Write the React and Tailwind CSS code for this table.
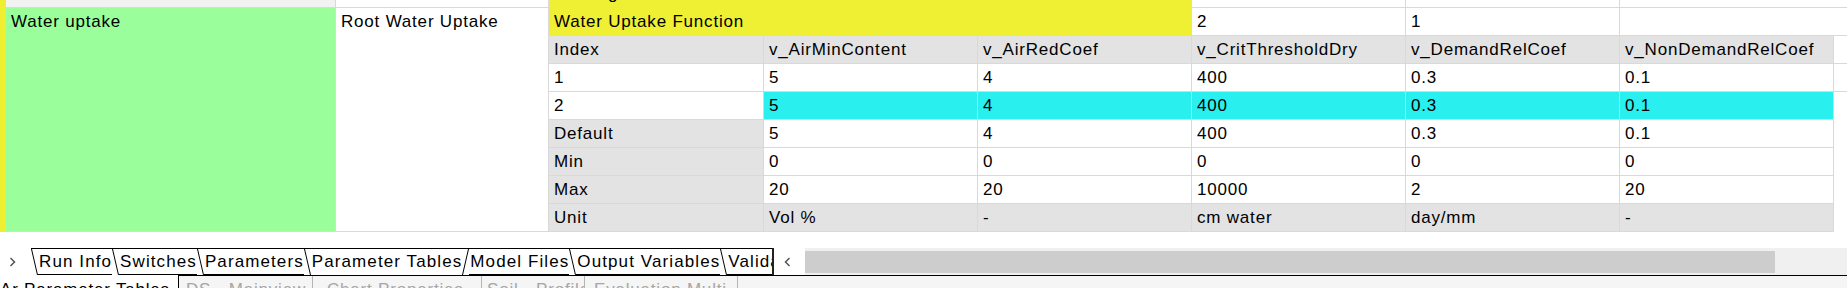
import React from "react";

const header = [
  "Index",
  "v_AirMinContent",
  "v_AirRedCoef",
  "v_CritThresholdDry",
  "v_DemandRelCoef",
  "v_NonDemandRelCoef",
];

// parameter table body: label column + five value columns
const rows = [
  { label: "1", values: ["5", "4", "400", "0.3", "0.1"], labelBg: "bg-white", valueBg: "bg-white", tail: true },
  { label: "2", values: ["5", "4", "400", "0.3", "0.1"], labelBg: "bg-white", valueBg: "bg-[#2aefef]", tail: false },
  { label: "Default", values: ["5", "4", "400", "0.3", "0.1"], labelBg: "bg-[#e3e3e3]", valueBg: "bg-white", tail: false },
  { label: "Min", values: ["0", "0", "0", "0", "0"], labelBg: "bg-[#e3e3e3]", valueBg: "bg-white", tail: false },
  { label: "Max", values: ["20", "20", "10000", "2", "20"], labelBg: "bg-[#e3e3e3]", valueBg: "bg-white", tail: false },
  { label: "Unit", values: ["Vol %", "-", "cm water", "day/mm", "-"], labelBg: "bg-[#e3e3e3]", valueBg: "bg-[#e3e3e3]", tail: false },
];

const tabs = [
  { name: "Run Info" },
  { name: "Switches" },
  { name: "Parameters" },
  { name: "Parameter Tables", active: true },
  { name: "Model Files" },
  { name: "Output Variables" },
  { name: "Validation" },
];

const subTabs = [
  { name: "DS - Mainview", w: "w-[134px]", pl: "pl-[7px]" },
  { name: "Chart Properties", w: "w-[169px]", pl: "pl-[14px]" },
  { name: "Soil - Profile", w: "w-[103px]", pl: "pl-[5px]" },
  { name: "Evaluation Multi", w: "w-[153px]", pl: "pl-[9px]" },
];

function Cell({ children, className }) {
  return (
    <div
      className={`flex h-full shrink-0 items-center overflow-hidden whitespace-nowrap border-b border-r border-[#d9d9d9] pl-[5px] ${className}`}
    >
      {children}
    </div>
  );
}

function TableRow({ label, values, labelBg, valueBg, tail }) {
  return (
    <div className="flex h-[28px]">
      <Cell className={`w-[215px] ${labelBg}`}>{label}</Cell>
      {values.map((v, i) => (
        <Cell key={i} className={`w-[214px] ${valueBg}`}>
          {v}
        </Cell>
      ))}
      <div className={tail ? "flex-1 border-b border-[#d9d9d9]" : "flex-1"} />
    </div>
  );
}

function Slash({ back = true }) {
  return (
    <svg width="7" height="26" viewBox="0 0 7 26" className="shrink-0">
      {back ? (
        <line x1="0.5" y1="0" x2="6.5" y2="26" stroke="#000" strokeWidth="1" />
      ) : (
        <line x1="0.5" y1="26" x2="6.5" y2="0" stroke="#000" strokeWidth="1" />
      )}
    </svg>
  );
}

function SheetTabs() {
  return (
    <div className="flex h-[27px] w-[741px] shrink-0 overflow-hidden border-t border-black tracking-[1.1px]">
      {tabs.map((t, i) => {
        const prevActive = i > 0 && tabs[i - 1].active;
        return (
          <React.Fragment key={t.name}>
            <Slash back={!prevActive} />
            <span
              className={`flex shrink-0 items-center whitespace-nowrap pl-[1px] ${
                t.active ? "bg-white" : "border-b border-black"
              }`}
            >
              {t.name}
            </span>
          </React.Fragment>
        );
      })}
    </div>
  );
}

export default function App() {
  return (
    <div className="h-[288px] w-[1847px] overflow-hidden bg-white font-['Liberation_Sans',Arial,sans-serif] text-[17px] leading-[20px] tracking-[0.8px] text-black">
      <div className="flex h-[232px]">
        <div className="w-[6px] shrink-0 bg-[#efef32]" />
        <div className="flex flex-1 flex-col">
          {/* previous row, scrolled almost out of view */}
          <div className="flex h-[8px] border-b border-[#d9d9d9]">
            <div className="w-[330px] border-r border-[#d9d9d9] bg-[#f2f2f2]" />
            <div className="w-[213px] border-r border-[#d9d9d9]" />
            <div className="w-[643px] overflow-hidden bg-[#efef33]">
              <div className="-mt-[20px] flex h-[27px] items-center pl-[5px]">Rooting</div>
            </div>
            <div className="w-[214px] border-r border-[#d9d9d9]" />
            <div className="w-[214px] border-r border-[#d9d9d9]" />
            <div className="flex-1" />
          </div>

          <div className="flex h-[224px]">
            <div className="w-[330px] shrink-0 border-b border-r border-[#d9d9d9] bg-[#9aff9a]">
              <div className="flex h-[27px] items-center pl-[5px]">Water uptake</div>
            </div>
            <div className="w-[213px] shrink-0 border-b border-r border-[#d9d9d9]">
              <div className="flex h-[27px] items-center pl-[5px]">Root Water Uptake</div>
            </div>
            <div className="flex flex-1 flex-col">
              <div className="flex h-[28px] border-b border-[#d9d9d9]">
                <div className="flex w-[643px] shrink-0 items-center bg-[#efef33] pl-[5px]">
                  Water Uptake Function
                </div>
                <div className="flex w-[214px] shrink-0 items-center border-r border-[#d9d9d9] pl-[5px]">2</div>
                <div className="flex w-[214px] shrink-0 items-center border-r border-[#d9d9d9] pl-[5px]">1</div>
                <div className="flex-1" />
              </div>

              <div className="flex h-[28px]">
                {header.map((h, i) => (
                  <Cell key={h} className={`${i === 0 ? "w-[215px]" : "w-[214px]"} bg-[#e3e3e3]`}>
                    {h}
                  </Cell>
                ))}
                <div className="flex-1 border-b border-[#d9d9d9]" />
              </div>
              {rows.map((r) => (
                <TableRow key={r.label} {...r} />
              ))}
            </div>
          </div>
        </div>
      </div>

      <div className="h-[16px]" />

      {/* sheet tabs + horizontal scroller */}
      <div className="flex h-[27px]">
        <div className="flex w-[31px] shrink-0 items-center pl-[9px]">
          <svg width="7" height="10" viewBox="0 0 7 10">
            <polyline points="1.5,1 5.5,5 1.5,9" fill="none" stroke="#555" strokeWidth="1.5" />
          </svg>
        </div>
        <SheetTabs />
        <div className="w-[2px] shrink-0 bg-[#222]" />
        <div className="flex w-[31px] shrink-0 items-center pl-[10px]">
          <svg width="7" height="10" viewBox="0 0 7 10">
            <polyline points="5.5,1 1.5,5 5.5,9" fill="none" stroke="#555" strokeWidth="1.5" />
          </svg>
        </div>
        <div className="flex flex-1 items-center bg-[#f0f0f0]">
          <div className="h-[22px] w-[970px] bg-[#cdcdcd]" />
        </div>
      </div>

      <div className="flex h-[40px]">
        <div className="w-[178px] shrink-0 whitespace-nowrap pt-[5px]">Ar Parameter Tables</div>
        <div className="flex flex-1 border-l border-t border-black bg-[#f5f5f5] text-[#a6a6a6]">
          {subTabs.map((s) => (
            <div
              key={s.name}
              className={`${s.w} ${s.pl} shrink-0 overflow-hidden whitespace-nowrap border-r border-[#b5b5b5] pt-[4px]`}
            >
              {s.name}
            </div>
          ))}
        </div>
      </div>
    </div>
  );
}
